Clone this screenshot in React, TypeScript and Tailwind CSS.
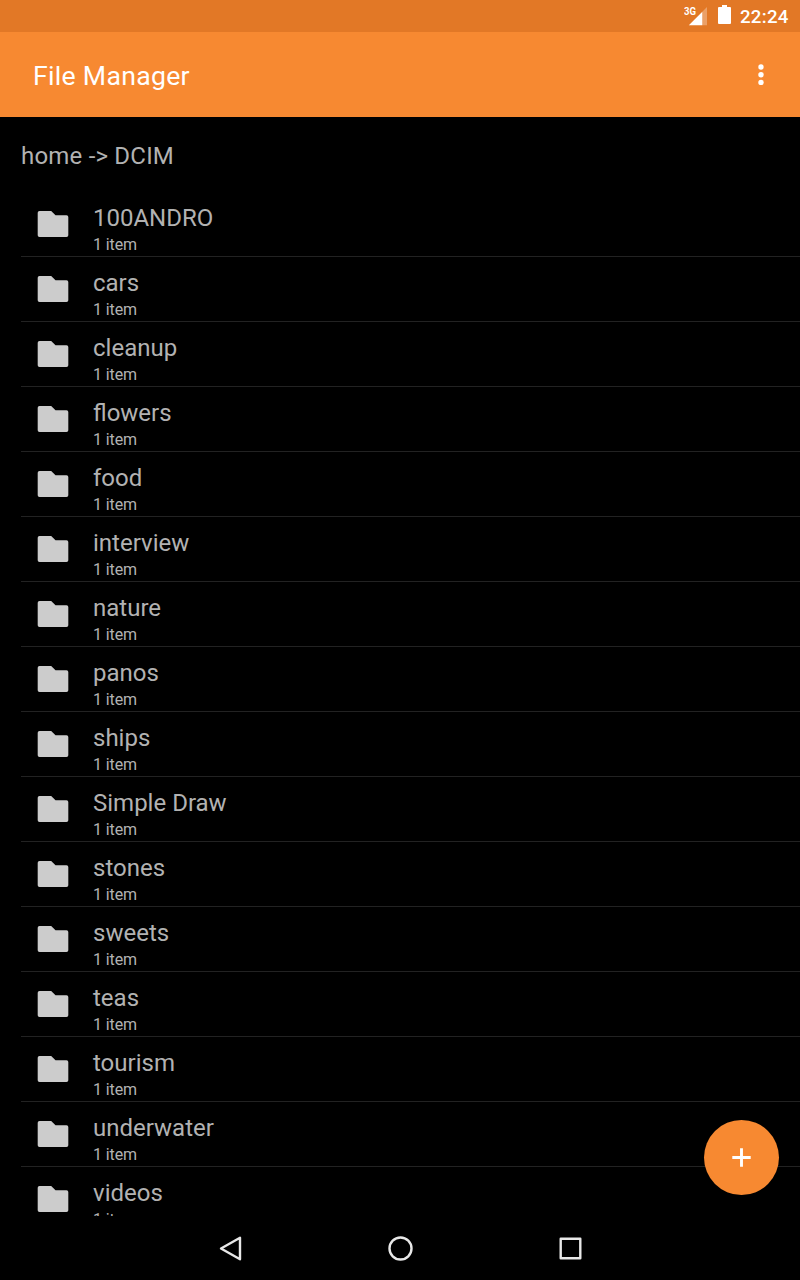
const folders = [
  "100ANDRO", "cars", "cleanup", "flowers", "food", "interview", "nature", "panos",
  "ships", "Simple Draw", "stones", "sweets", "teas", "tourism", "underwater", "videos",
];

function StatusBar() {
  return (
    <div className="flex h-8 shrink-0 items-start justify-end bg-[#e27826] pr-[11px] text-white">
      <svg className="h-8 w-[26px]" viewBox="0 0 26 32">
        <text x="0" y="15" fontSize="10.6" fontWeight="700" fill="#fff" textLength="12" lengthAdjust="spacingAndGlyphs">3G</text>
        <path d="M18.3 11.7 L23 7 V25.2 H18.3 Z" fill="#fff" fillOpacity="0.3" />
        <path d="M4.8 25.2 L18.3 11.7 V25.2 Z" fill="#fff" />
      </svg>
      <svg className="ml-2 h-8 w-[13px]" viewBox="0 0 13 32">
        <path d="M4 5h5v2h3a1 1 0 0 1 1 1v15a1 1 0 0 1-1 1H1a1 1 0 0 1-1-1V8a1 1 0 0 1 1-1h3z" fill="#fff" />
      </svg>
      <span className="ml-[9px] w-[49px] pt-px text-[18.67px] leading-8 font-medium tracking-[0.25px] whitespace-nowrap">22:24</span>
    </div>
  );
}

function Toolbar() {
  return (
    <header className="flex h-[85px] shrink-0 items-center justify-between bg-[#f78931] pr-[36.5px] pl-[33px] text-white">
      <h1 className="pt-0.5 text-[26.67px] leading-8 font-normal tracking-[0.28px]">File Manager</h1>
      <svg className="h-[22px] w-[6px]" viewBox="0 0 6 22" fill="#fff">
        <circle cx="3" cy="3" r="2.7" />
        <circle cx="3" cy="10.7" r="2.7" />
        <circle cx="3" cy="18.4" r="2.7" />
      </svg>
    </header>
  );
}

function FolderRow({ name }: { name: string }) {
  return (
    <li className="flex h-[65px] shrink-0 border-b border-[#222222] pl-4">
      <svg className="mt-[18px] h-7 w-8 shrink-0" viewBox="0 0 32 28">
        <path d="M2.5 1H14.2L18.5 5.3H29.5Q31.3 5.3 31.3 7.1V25.2Q31.3 27 29.5 27H2.5Q0.7 27 0.7 25.2V2.8Q0.7 1 2.5 1Z" fill="#cccccc" />
      </svg>
      <div className="ml-6 pt-3">
        <div className="text-2xl leading-7">{name}</div>
        <div className="text-base leading-[25px] tracking-[-0.1px]">1 item</div>
      </div>
    </li>
  );
}

function NavigationBar() {
  return (
    <nav className="flex h-16 shrink-0 items-center justify-center gap-[138px] bg-black">
      <svg className="h-8 w-8" viewBox="0 0 32 32" fill="none" stroke="#e8e8e8" strokeWidth="2.4" strokeLinejoin="round">
        <path d="M7 16.5 26 5.8V27.2Z" />
      </svg>
      <svg className="h-8 w-8" viewBox="0 0 32 32" fill="none" stroke="#e8e8e8" strokeWidth="2.4">
        <circle cx="16.5" cy="16.5" r="11" />
      </svg>
      <svg className="h-8 w-8" viewBox="0 0 32 32" fill="none" stroke="#e8e8e8" strokeWidth="2.4" strokeLinejoin="round">
        <rect x="6.7" y="6.7" width="19.6" height="19.6" />
      </svg>
    </nav>
  );
}

export default function App() {
  return (
    <div className="relative flex h-[1280px] w-[800px] flex-col overflow-hidden bg-black font-['Roboto',sans-serif] text-[#b2b2b2]">
      <StatusBar />
      <Toolbar />
      <main className="flex min-h-0 flex-1 flex-col overflow-hidden pl-[21px]">
        <div className="h-[75px] shrink-0 pt-[25px] text-2xl leading-7 tracking-[0.2px]">home -&gt; DCIM</div>
        <ul className="flex min-h-0 flex-1 flex-col overflow-hidden">
          {folders.map((name) => (
            <FolderRow key={name} name={name} />
          ))}
        </ul>
      </main>
      <NavigationBar />
      <button aria-label="Add" className="absolute top-[1120px] left-[704px] flex size-[75px] items-center justify-center rounded-full bg-[#f78931]">
        <svg className="h-[19px] w-[19px]" viewBox="0 0 19 19" stroke="#fff" strokeWidth="2.9">
          <path d="M9.5 0.3V18.7M0.3 9.5H18.7" />
        </svg>
      </button>
    </div>
  );
}
